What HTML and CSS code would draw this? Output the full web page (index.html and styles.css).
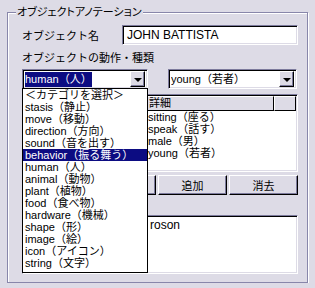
FILE: index.html
```html
<!DOCTYPE html>
<html lang="ja">
<head>
    <meta charset="UTF-8">
    <title>オブジェクトアノテーション</title>
    <link rel="stylesheet" href="styles.css">
</head>
<body>
    <div class="group">
        <span class="group-title">オブジェクトアノテーション</span>
        <div class="row row-name">
            <span class="label">オブジェクト名</span>
            <div class="field name-field">JOHN BATTISTA</div>
        </div>
        <div class="row row-caption">オブジェクトの動作・種類</div>
        <div class="row row-combos">
            <div class="combo combo-category">
                <div class="combo-text"><span class="selected">human（人）</span></div>
                <span class="combo-btn"><span class="arrow"></span></span>
                <ul class="combo-list">
                    <li>＜カテゴリを選択＞</li>
                    <li>stasis（静止）</li>
                    <li>move（移動）</li>
                    <li>direction（方向）</li>
                    <li>sound（音を出す）</li>
                    <li class="active">behavior（振る舞う）</li>
                    <li>human（人）</li>
                    <li>animal（動物）</li>
                    <li>plant（植物）</li>
                    <li>food（食べ物）</li>
                    <li>hardware（機械）</li>
                    <li>shape（形）</li>
                    <li>image（絵）</li>
                    <li>icon（アイコン）</li>
                    <li>string（文字）</li>
                </ul>
            </div>
            <div class="combo combo-detail">
                <div class="combo-text">young（若者）</div>
                <span class="combo-btn"><span class="arrow"></span></span>
            </div>
        </div>
        <div class="listview">
            <div class="lv-head">
                <span class="col col-kind">種類</span>
                <span class="col col-detail">詳細</span>
                <span class="col col-rest"></span>
            </div>
            <div class="lv-row"><span class="col col-kind">behavior</span><span class="col col-detail">sitting（座る）</span></div>
            <div class="lv-row"><span class="col col-kind">sound</span><span class="col col-detail">speak（話す）</span></div>
            <div class="lv-row"><span class="col col-kind">human</span><span class="col col-detail">male（男）</span></div>
            <div class="lv-row"><span class="col col-kind">human</span><span class="col col-detail">young（若者）</span></div>
        </div>
        <div class="buttons">
            <button class="btn btn-edit">変更</button>
            <button class="btn">追加</button>
            <button class="btn">消去</button>
        </div>
        <div class="row row-desc">説明</div>
        <div class="field desc-field"><span class="desc-text">roson</span></div>
    </div>
</body>
</html>
```

FILE: styles.css
```css
* {
    box-sizing: border-box;
}
body {
    margin: 0;
    background: #dddbe6;
    font-family: 'Liberation Sans', 'Noto Sans CJK JP', sans-serif;
    font-size: 11px;
    color: #000;
}
.group {
    position: relative;
    margin: 12px 0 0 7px;
    width: 301px;
    height: 271px;
    border: 1px solid #8886aa;
    box-shadow: inset 1px 1px #fff, 1px 1px #fff;
    padding: 12px 0 0 14px;
}
.group-title {
    position: absolute;
    top: -9px;
    left: 8px;
    padding: 0 1px;
    background: #dddbe6;
    line-height: 16px;
    font-feature-settings: 'palt';
}
.row {
    display: flex;
    align-items: center;
}
.row-name {
    height: 20px;
}
.label {
    width: 100px;
}
.field {
    background: #fff;
    border: 1px solid;
    border-color: #7c7a9c #fff #fff #7c7a9c;
    box-shadow: inset 1px 1px #000, inset -1px -1px #dddbe6;
}
.name-field {
    width: 176px;
    height: 20px;
    padding: 2px 0 0 4px;
    line-height: 15px;
    font-size: 12px;
}
.row-caption {
    height: 24px;
}
.row-combos {
    height: 20px;
    gap: 20px;
}
.combo {
    position: relative;
    height: 20px;
    display: flex;
    align-items: center;
    background: #fff;
    border: 1px solid;
    border-color: #7c7a9c #fff #fff #7c7a9c;
    box-shadow: inset 1px 1px #000, inset -1px -1px #dddbe6;
    padding: 2px;
}
.combo-category {
    width: 126px;
}
.combo-detail {
    width: 129px;
}
.combo-text {
    flex: 1;
    line-height: 16px;
    white-space: nowrap;
    overflow: hidden;
}
.selected {
    background: #0c0c82;
    color: #fff;
    display: inline-block;
    line-height: 15px;
}
.combo-btn {
    width: 15px;
    height: 16px;
    background: #dddbe6;
    border: 1px solid;
    border-color: #fff #000 #000 #fff;
    box-shadow: inset -1px -1px #7c7a9c;
    display: flex;
    align-items: center;
    justify-content: center;
}
.arrow {
    width: 0;
    height: 0;
    border-left: 4px solid transparent;
    border-right: 4px solid transparent;
    border-top: 4px solid #000;
    margin-top: 1px;
}
.combo-list {
    position: absolute;
    top: 18px;
    left: -1px;
    width: 126px;
    margin: 0;
    padding: 0 0 3px;
    list-style: none;
    background: #fff;
    border: 1px solid #000;
    z-index: 2;
}
.combo-list li {
    height: 12px;
    line-height: 12px;
    padding-left: 2px;
    white-space: nowrap;
}
.combo-list li.active {
    background: #0c0c82;
    color: #fff;
}
.listview {
    width: 276px;
    height: 78px;
    margin-top: 5px;
    background: #fff;
    border: 1px solid;
    border-color: #7c7a9c #fff #fff #7c7a9c;
    box-shadow: inset 1px 1px #000, inset -1px -1px #dddbe6;
    padding: 1px;
}
.lv-head {
    display: flex;
    height: 15px;
    background: #dddbe6;
}
.lv-head .col {
    border: 1px solid;
    border-color: #fff #000 #000 #fff;
    line-height: 13px;
    padding-left: 1px;
}
.lv-row {
    display: flex;
    height: 12px;
    line-height: 12px;
}
.col {
    white-space: nowrap;
    overflow: hidden;
}
.col-kind {
    width: 123px;
}
.col-detail {
    width: 127px;
    padding-left: 1px;
}
.lv-head .col-rest {
    flex: 1;
}
.buttons {
    display: flex;
    gap: 2px;
    width: 276px;
    margin-top: 3px;
}
.btn {
    height: 20px;
    padding: 0;
    font: inherit;
    background: #dddbe6;
    border: 1px solid;
    border-color: #fff #000 #000 #fff;
    box-shadow: inset -1px -1px #7c7a9c;
    width: 69px;
}
.btn-edit {
    width: 134px;
}
.row-desc {
    height: 20px;
}
.desc-field {
    width: 276px;
    height: 59px;
    padding: 3px 0 0 127px;
    line-height: 13px;
    font-size: 12px;
}
```
